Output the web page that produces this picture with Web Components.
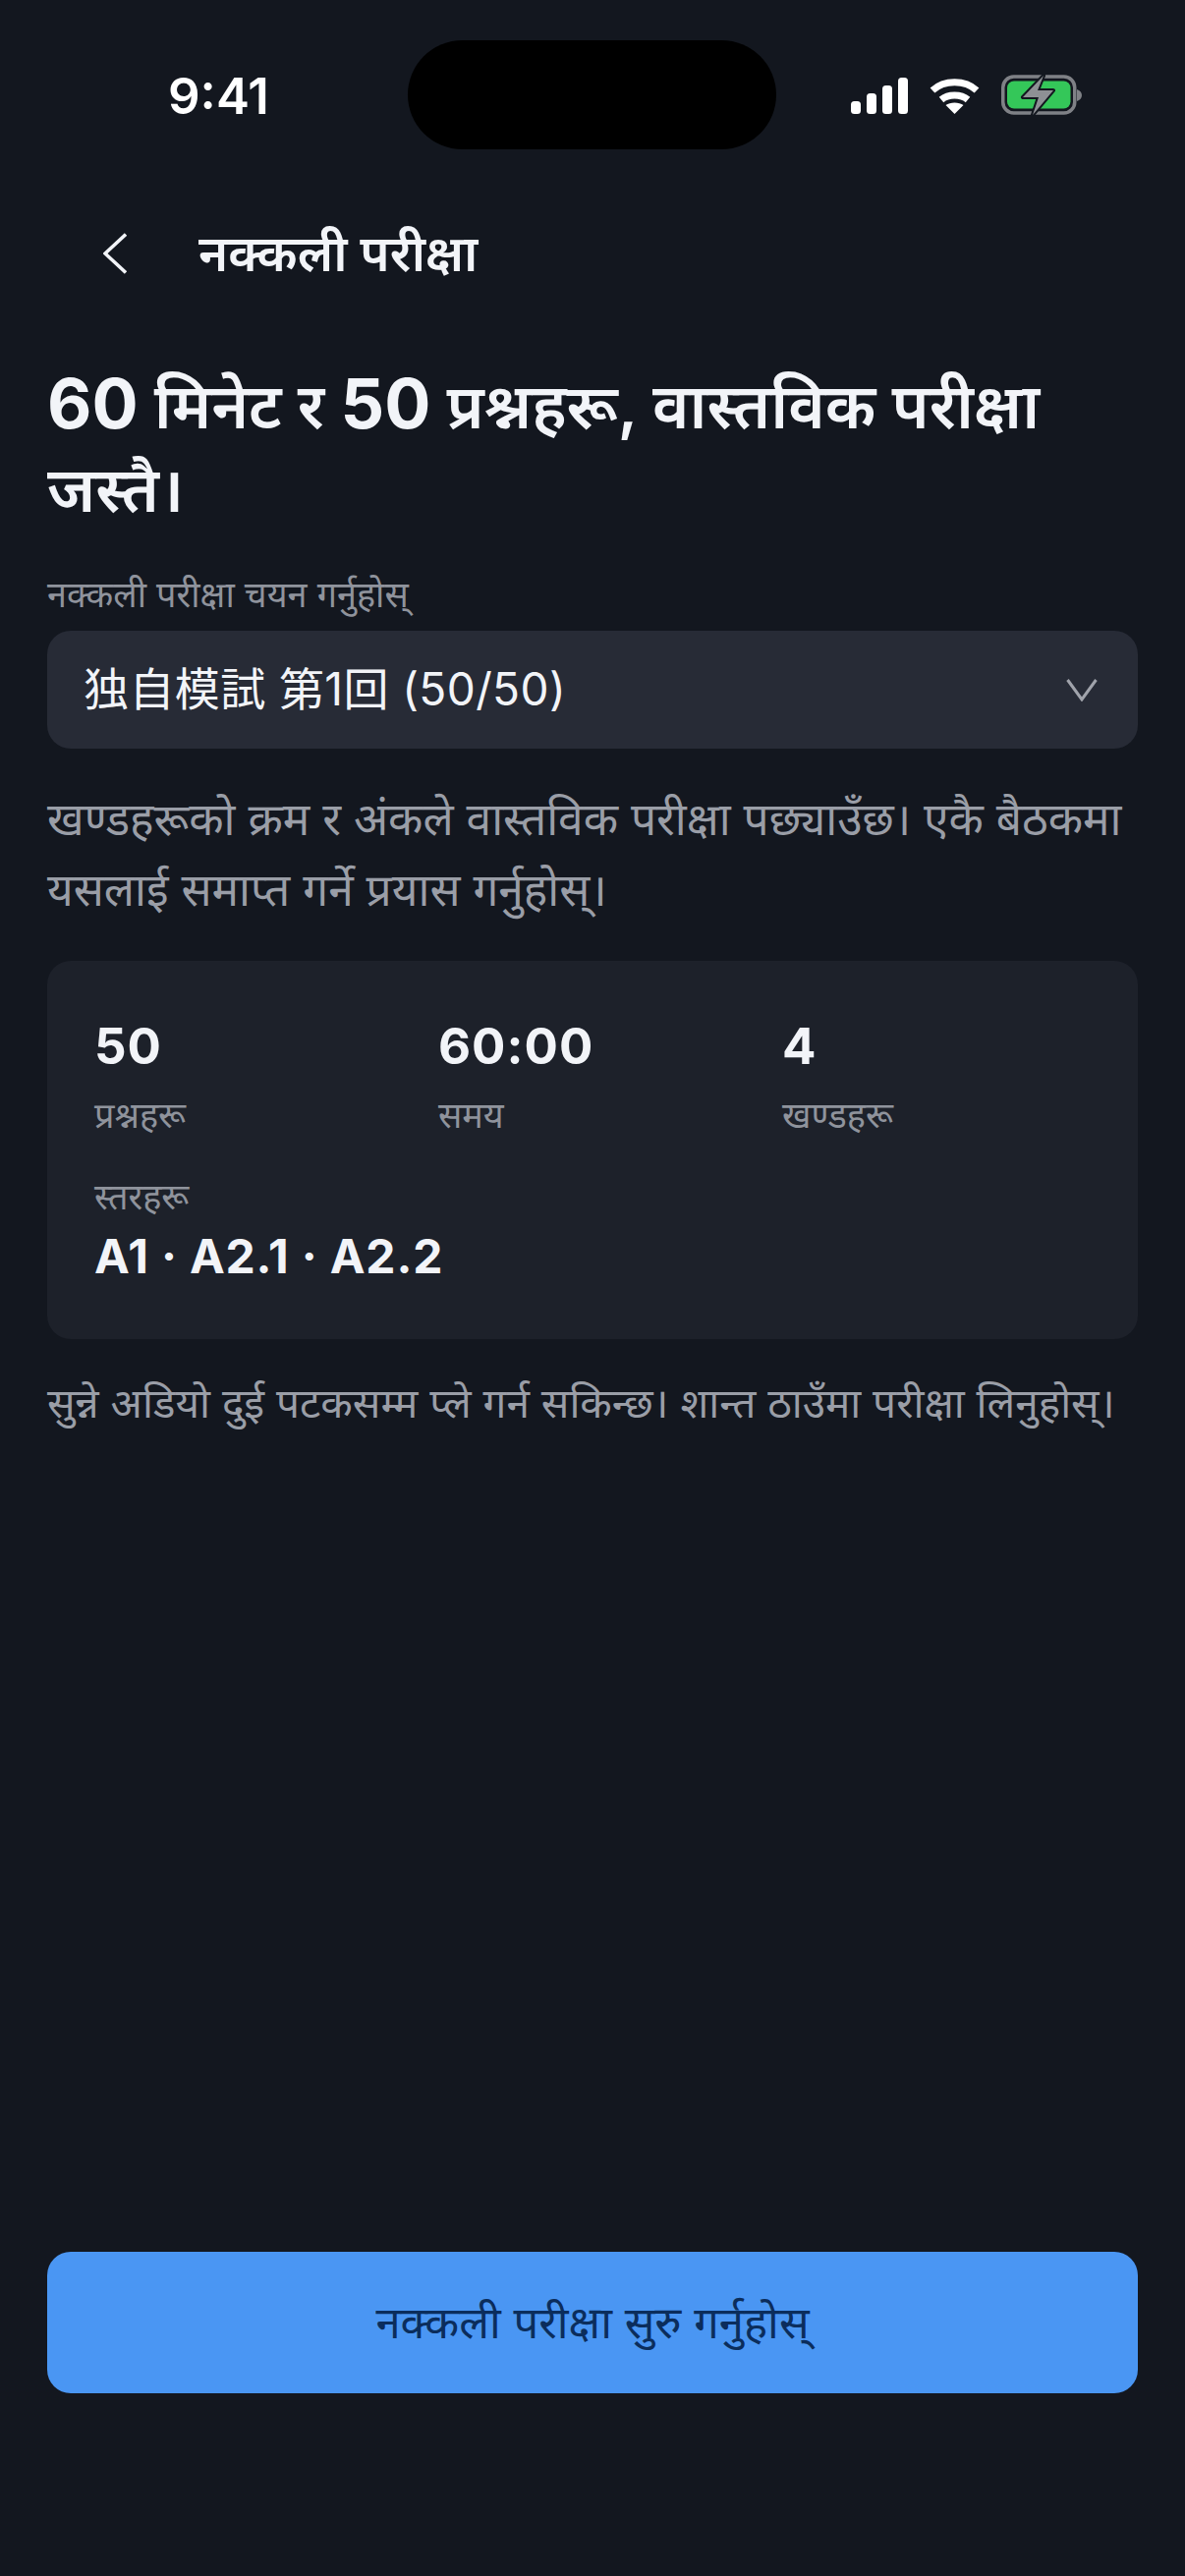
<!DOCTYPE html>
<html lang="ne"><head><meta charset="utf-8">
<style>
html,body{margin:0;padding:0;background:#13171f}
body{width:1206px;height:2622px;overflow:hidden;font-family:Inter,"Noto Sans","Noto Sans CJK JP",sans-serif}
</style></head><body>
<exam-app></exam-app>
<script>
const FONT='Inter,"Noto Sans","Noto Sans CJK JP",sans-serif';
function def(name,html){customElements.define(name,class extends HTMLElement{constructor(){super();this.attachShadow({mode:'open'}).innerHTML=html;}})}
def('status-bar',`<style>
:host{display:flex;align-items:center;height:192px;box-sizing:border-box;padding:0 105px 0 171px;justify-content:space-between;position:relative}
.t{font:600 51px/1 ${FONT};color:#fff;margin-top:3px}
.island{position:absolute;left:415px;top:41px;width:375px;height:111px;border-radius:56px;background:#000}
.icons{display:flex;align-items:center;gap:22px;margin-top:2px}
svg{display:block}
</style>
<span class="t">9:41</span><div class="island"></div>
<div class="icons">
<svg width="58" height="37" viewBox="0 0 58 37"><rect x="0" y="24" width="10" height="13" rx="3.500" fill="#fff"/><rect x="16" y="16" width="10" height="21" rx="3.500" fill="#fff"/><rect x="32" y="8" width="10" height="29" rx="3.500" fill="#fff"/><rect x="48" y="0" width="10" height="37" rx="3.500" fill="#fff"/></svg>
<svg width="51" height="37" viewBox="0 0 51 37" fill="none"><path d="M3 13C15 2 36 2 48 13" stroke="#fff" stroke-width="7"/><path d="M12 22.500C19 16.500 32 16.500 39 22.500" stroke="#fff" stroke-width="7"/><path d="M25.500 37L16.500 28C21 24.500 30 24.500 34.500 28Z" fill="#fff"/></svg>
<svg width="82" height="42" viewBox="0 0 82 42"><rect x="1.750" y="2" width="73" height="37" rx="11" fill="none" stroke="#7f8186" stroke-width="3.500"/><path d="M77 15c3 1 5 3 5 6s-2 5-5 6z" fill="#7f8186"/><rect x="6" y="6.500" width="64.500" height="28" rx="7" fill="#34c759"/><path d="M43 1L22 23H38L32 41L53 16H37Z" fill="#8e9095" stroke="#13171f" stroke-width="4" stroke-linejoin="round" paint-order="stroke"/></svg>
</div>`);
def('nav-bar',`<style>
:host{display:flex;align-items:center;height:132px;padding-left:105px;box-sizing:border-box}
svg{display:block;margin-right:73px}
span{font:600 51px/1.2 ${FONT};color:#f2f4f8}
</style><svg width="24" height="42" viewBox="0 0 24 42" fill="none"><path d="M23 1.500L2 21L23 40.500" stroke="#f2f4f8" stroke-width="3.500"/></svg><span><slot></slot></span>`);
def('exam-select',`<style>
:host{display:flex;align-items:center;justify-content:space-between;height:120px;box-sizing:border-box;padding:0 41px 0 37px;background:#272b36;border-radius:24px;color:#f2f4f8;font:400 46px/1.2 ${FONT};letter-spacing:.4px}
svg{display:block}
</style><span><slot></slot></span><svg width="32" height="24" viewBox="0 0 32 24" fill="none"><path d="M1.500 2L16 22L30.500 2" stroke="#a0a3ab" stroke-width="3"/></svg>`);
def('stat-item',`<style>
:host{display:block}
.v{font:700 51px/60px ${FONT};color:#f2f4f8;letter-spacing:1px}
.l{font:400 36px/48px ${FONT};color:#8f939c;margin-top:16px}
</style><div class="v"><slot name="value"></slot></div><div class="l"><slot></slot></div>`);
def('info-card',`<style>
:host{display:block;background:#1d212a;border-radius:24px;padding:57px 48px 0 48px;height:385px;box-sizing:border-box}
.g{display:grid;grid-template-columns:repeat(3,350px)}
.lv{margin-top:35px}
.l{font:400 36px/48px ${FONT};color:#8f939c}
.v{font:700 48px/58px ${FONT};color:#f2f4f8;margin-top:8px;letter-spacing:.8px}
</style><div class="g"><slot></slot></div><div class="lv"><div class="l"><slot name="lab"></slot></div><div class="v"><slot name="val"></slot></div></div>`);
def('primary-btn',`<style>
:host{display:flex;align-items:center;justify-content:center;height:144px;background:#4a96f3;border-radius:24px;color:#0b2d5c;font:400 45.400px/1.2 ${FONT}}
</style><slot></slot>`);
def('exam-app',`<style>
:host{display:flex;flex-direction:column;height:2622px;box-sizing:border-box;background:#13171f;position:relative}
main{flex:1;display:flex;flex-direction:column;padding:0 48px}
h1{margin:44px 0 0;font:600 64px/85px ${FONT};color:#f2f4f8}
h1 b{font:700 70px/85px ${FONT}}
.lab{font:400 36px/48px ${FONT};color:#8f939c;margin:41px 0 13px}
.p{font:400 46px/72px ${FONT};color:#9a9ea7}
.d{margin:35px 0 37px}
.n{margin-top:29px;font-size:42.300px}
.foot{margin-top:auto;padding-bottom:186px}
</style>
<status-bar></status-bar>
<nav-bar>नक्कली परीक्षा</nav-bar>
<main>
<h1><b>60</b> मिनेट र <b>50</b> प्रश्नहरू, वास्तविक परीक्षा <span>जस्तै।</span></h1>
<div class="lab">नक्कली परीक्षा चयन गर्नुहोस्</div>
<exam-select>独自模試 第1回 (50/50)</exam-select>
<div class="p d">खण्डहरूको क्रम र अंकले वास्तविक परीक्षा पछ्याउँछ। एकै बैठकमा यसलाई समाप्त गर्ने प्रयास गर्नुहोस्।</div>
<info-card>
<stat-item><span slot="value">50</span>प्रश्नहरू</stat-item>
<stat-item><span slot="value">60:00</span>समय</stat-item>
<stat-item><span slot="value">4</span>खण्डहरू</stat-item>
<span slot="lab">स्तरहरू</span><span slot="val">A1 · A2.1 · A2.2</span>
</info-card>
<div class="p n">सुन्ने अडियो दुई पटकसम्म प्ले गर्न सकिन्छ। शान्त ठाउँमा परीक्षा लिनुहोस्।</div>
<div class="foot"><primary-btn>नक्कली परीक्षा सुरु गर्नुहोस्</primary-btn></div>
</main>`);
</script>
</body></html>
